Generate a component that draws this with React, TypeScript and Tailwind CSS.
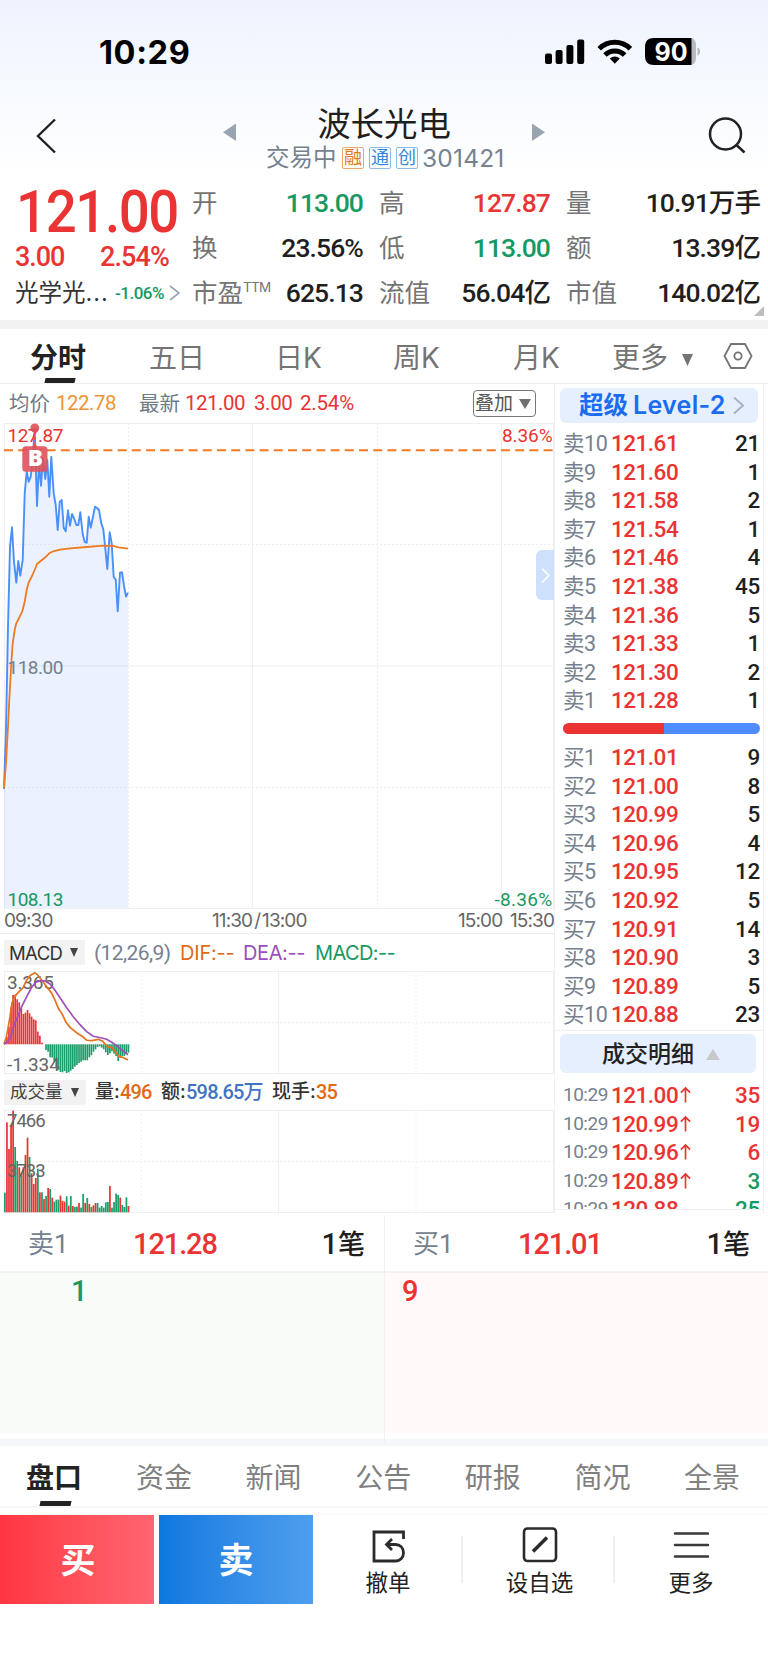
import React from "react";

const CJK = "font-['Inter','Noto_Sans_CJK_SC',sans-serif]";
const DIN = "font-['Roboto','Noto_Sans_CJK_SC',sans-serif]";

type Quote = [label: string, value: string, color: string];

const QUOTES: Quote[][] = [
  [["开", "113.00", "text-[#17995f]"], ["高", "127.87", "text-[#ea3434]"], ["量", "10.91万手", "text-[#1f1f1f]"]],
  [["换", "23.56%", "text-[#1f1f1f]"], ["低", "113.00", "text-[#17995f]"], ["额", "13.39亿", "text-[#1f1f1f]"]],
  [["市盈", "625.13", "text-[#1f1f1f]"], ["流值", "56.04亿", "text-[#1f1f1f]"], ["市值", "140.02亿", "text-[#1f1f1f]"]],
];

const SELLS: [string, string, string][] = [
  ["卖10", "121.61", "21"], ["卖9", "121.60", "1"], ["卖8", "121.58", "2"], ["卖7", "121.54", "1"], ["卖6", "121.46", "4"],
  ["卖5", "121.38", "45"], ["卖4", "121.36", "5"], ["卖3", "121.33", "1"], ["卖2", "121.30", "2"], ["卖1", "121.28", "1"],
];
const BUYS: [string, string, string][] = [
  ["买1", "121.01", "9"], ["买2", "121.00", "8"], ["买3", "120.99", "5"], ["买4", "120.96", "4"], ["买5", "120.95", "12"],
  ["买6", "120.92", "5"], ["买7", "120.91", "14"], ["买8", "120.90", "3"], ["买9", "120.89", "5"], ["买10", "120.88", "23"],
];
const TICKS: [string, string, string][] = [
  ["121.00", "35", "text-[#ea3434]"], ["120.99", "19", "text-[#ea3434]"], ["120.96", "6", "text-[#ea3434]"],
  ["120.89", "3", "text-[#17995f]"], ["120.88", "25", "text-[#17995f]"],
];

/* Series are stored at three units per pixel. */
const PRICE: [number, number][] = [
  [12, 1227], [18, 1050], [24, 740], [30, 500], [36, 442], [42, 545], [49, 608], [55, 543], [61, 587], [68, 540], [74, 340], [80, 275],
  [86, 305], [92, 290], [98, 240], [104, 145], [111, 378], [117, 250], [123, 317], [129, 235], [136, 297], [142, 240], [148, 350],
  [154, 230], [161, 340], [167, 375], [173, 450], [179, 366], [185, 360], [191, 443], [197, 454], [204, 391], [210, 437], [216, 402],
  [222, 415], [229, 435], [235, 435], [241, 397], [248, 462], [254, 486], [260, 488], [266, 410], [272, 443], [279, 410], [285, 380],
  [291, 384], [297, 390], [304, 430], [310, 448], [316, 505], [322, 567], [329, 457], [335, 490], [341, 592], [347, 598], [353, 694],
  [360, 578], [366, 577], [372, 618], [378, 650], [384, 638],
];
const AVERAGE: [number, number][] = [
  [12, 1225], [18, 1150], [24, 1040], [28, 960], [34, 850], [38, 790], [44, 750], [49, 730], [58, 712], [67, 694], [74, 665], [80, 630],
  [86, 607], [96, 588], [104, 570], [111, 552], [123, 542], [136, 532], [148, 520], [160, 514], [180, 509], [210, 505], [260, 501],
  [310, 497], [341, 498], [355, 502], [384, 506],
];
const DIF: [number, number][] = [
  [12, 492], [18, 475], [24, 445], [30, 410], [36, 368], [48, 345], [60, 332], [68, 325], [80, 300], [90, 287], [104, 278], [112, 284],
  [125, 300], [140, 320], [155, 340], [165, 360], [175, 385], [187, 403], [197, 425], [210, 442], [222, 452], [235, 462], [247, 469],
  [260, 481], [275, 482], [295, 478], [308, 484], [322, 500], [335, 502], [345, 513], [357, 530], [368, 532], [384, 540],
];
const DEA: [number, number][] = [
  [12, 492], [24, 484], [32, 470], [44, 430], [55, 405], [65, 380], [80, 350], [95, 322], [108, 307], [120, 302], [135, 303], [150, 312],
  [163, 328], [180, 353], [200, 383], [220, 410], [240, 434], [260, 455], [280, 469], [305, 474], [320, 478], [335, 487], [350, 497],
  [365, 510], [384, 524],
];
const HIST = [
  487, 470, 440, 382, 345, 344, 358, 367, 385, 402, 398, 390, 400, 410, 418, 421, 455, 467, 488, 493, 510, 515, 532, 533, 545, 562, 570,
  576, 577, 573, 579, 577, 572, 567, 560, 555, 549, 545, 541, 541, 541, 532, 526, 515, 508, 501, 499, 503, 508, 517, 525, 520, 514, 521,
  528, 543, 530, 528, 528, 521, 518,
];
const VOLUME = (
  "g938 r727 r807 r735 r692 g801 g843 r862 g880 r862 r825 r773 g831 r880 r912 r894 g866 r937 g937 r957 g948 r924 g927 r953 g965 g959 g959 r947 r963 r965 g949 " +
  "r977 g948 r978 g981 g980 r969 g983 g942 r969 g954 r972 g981 r976 r969 g969 g983 g978 g983 g967 g966 r918 g983 g966 g941 g945 r953 g975 g981 g952 r978"
).split(" ");

/* Converts a series into svg points, moved up by the pane's own top. */
const points = (list: [number, number][], shift: number) => list.map(([x, y]) => `${(x / 3).toFixed(1)},${(y / 3 - shift).toFixed(1)}`).join(" ");

const barX = (i: number) => 4 + i * 2.06;

function Grid({ xs, ys, bottom, dx, dy }: { xs: number[]; ys: number[]; bottom: number; dx: boolean[]; dy: boolean[] }) {
  return (
    <g stroke="#efeff1" strokeWidth="1" fill="none">
      <path d={`M4 .5H554M4 ${bottom}H554M4.5 0V${bottom}M553.5 0V${bottom}`} />
      {xs.map((x, i) => <line key={x} x1={x} x2={x} y1="0" y2={bottom} strokeDasharray={dx[i] ? "2 2" : undefined} />)}
      {ys.map((y, i) => <line key={y} x1="4" x2="554" y1={y} y2={y} strokeDasharray={dy[i] ? "2 2" : undefined} />)}
    </g>
  );
}

function StatusBar() {
  return (
    <div className="flex h-[104px] items-start pt-[36px] pl-[99px] text-black">
      <span className="w-[446px] text-[32.500px] leading-[34px] font-bold tracking-[0.600px]">10:29</span>
      <svg width="160" height="33" viewBox="545 36 160 33">
        <rect x="545" y="53.5" width="7" height="10.5" rx="2" />
        <rect x="555.6" y="50" width="7" height="14" rx="2" />
        <rect x="566.4" y="45" width="7" height="19" rx="2" />
        <rect x="577.2" y="39.5" width="7" height="24.5" rx="2" />
        <g fill="none" stroke="#000" strokeWidth="5">
          <path d="M599.2 48.7a22.3 22.3 0 0 1 31.2 0" />
          <path d="M604.9 55a14 14 0 0 1 19.8 0" />
        </g>
        <path d="M614.8 63.8l-5-5.2a7.2 7.2 0 0 1 10 0z" />
        <path d="M690 38h-3v27h3c4 0 6-3 6-8V46c0-5-2-8-6-8z" fill="#b6b9be" />
        <path d="M697.5 47.5c3.4 1 3.4 7 0 8.200z" fill="#b6b9be" />
        <path d="M654 38h37.500v27H654c-6 0-9-3-9-9v-9c0-6 3-9 9-9z" />
        <text x="671" y="60.500" textAnchor="middle" fontFamily="Inter" fontSize="25" fontWeight="700" fill="#fff">90</text>
      </svg>
    </div>
  );
}

function TitleBar() {
  return (
    <div className="flex h-[72px]">
      <svg width="240" height="72" viewBox="0 104 240 72">
        <path d="M55 119.500L38 136l17 16.500" fill="none" stroke="#222" strokeWidth="2.400" />
        <path d="M236 123.500v17.500l-13-8.800z" fill="#98a4b0" />
      </svg>
      <div className="w-[288px]">
        <div className="h-[41px] text-center text-[33.500px] leading-[41px] text-[#1f1f1f] -tracking-[0.100px]">波长光电</div>
        <div className="flex h-[24px] items-center pt-[1px] pl-[26px] text-[23.500px] leading-[24px] text-[#75818f]">
          <span className="w-[76px]">交易中</span>
          <span className="mr-[5px] h-[22px] w-[22px] rounded-[2px] border border-[#eda96c] text-center text-[18px] leading-[20px] text-[#e07a22]">融</span>
          <span className="mr-[5px] h-[22px] w-[22px] rounded-[2px] border border-[#8cbdea] text-center text-[18px] leading-[20px] text-[#3488d8]">通</span>
          <span className="mr-[4px] h-[22px] w-[22px] rounded-[2px] border border-[#8cbdea] text-center text-[18px] leading-[20px] text-[#3488d8]">创</span>
          <span className="text-[24.500px] tracking-[0.200px]">301421</span>
        </div>
      </div>
      <svg width="240" height="72" viewBox="528 104 240 72">
        <path d="M532 123.500v17.500l13-8.800z" fill="#98a4b0" />
        <g fill="none" stroke="#222" strokeWidth="2.500">
          <circle cx="725.500" cy="134" r="15.500" />
          <path d="M736.500 145l8 7.500" />
        </g>
      </svg>
    </div>
  );
}

function QuoteBlock() {
  return (
    <div className="relative flex h-[144px] pt-[4px]">
      <div className={`${DIN} w-[192px] pl-[15px] font-medium text-[#ea3434]`}>
        <div className="ml-[1px] h-[62px] w-[168px] origin-left scale-x-[0.925] text-[59px] leading-[63px] tracking-[-1.500px]">121.00</div>
        <div className="flex h-[30px] text-[27px] leading-[30px] tracking-[-1.100px]">
          <span className="w-[85px]">3.00</span>
          <span className="tracking-[-0.900px]">2.54%</span>
        </div>
        <div className="flex h-[42px] items-center">
          <span className={`${CJK} w-[100px] text-[23.500px] font-normal text-[#333]`}>光学光<span className="tracking-[1px]">...</span></span>
          <span className="w-[54px] text-[17px] leading-[20px] tracking-[-0.500px] text-[#17995f]">-1.06%</span>
          <svg width="11" height="16" viewBox="0 0 11 16"><path d="M1 1l9 7-9 7" fill="none" stroke="#9aa6b3" strokeWidth="1.600" /></svg>
        </div>
      </div>
      <div className="flex flex-col">
        {QUOTES.map((row, r) => (
          <div key={r} className="grid h-[45px] grid-cols-[171px_16px_171px_16px_194px] items-center">
            {row.map(([label, value, color], c) => (
              <React.Fragment key={label}>
                {c > 0 && <span />}
                <div className="flex items-center justify-between">
                  <span className="flex text-[25.500px] leading-[44px] text-[#747474]">
                    {label}
                    {label === "市盈" && <sup className="top-0 pt-[11px] text-[13.500px] leading-[10px] tracking-[-0.700px]">TTM</sup>}
                  </span>
                  <span className={`${DIN} text-[26.500px] leading-[44px] font-medium tracking-[-0.900px] ${color}`}>{value}</span>
                </div>
              </React.Fragment>
            ))}
          </div>
        ))}
      </div>
      <svg className="absolute right-[4px] bottom-[4px]" width="10" height="10"><path d="M10 0v10H0z" fill="#bdbdbd" /></svg>
    </div>
  );
}

function PeriodTabs() {
  return (
    <div className="flex h-[55px] border-b border-[#eeeeee] text-[28px] leading-[58px] text-[#747474]">
      <div className="relative w-[149px] pl-[30px] font-bold text-[#222]">
        分时
        <span className="absolute bottom-0 left-[45px] h-[5px] w-[30px] -skew-x-12 bg-[#222]" />
      </div>
      <span className="w-[126px]">五日</span>
      <span className="w-[118px]">日K</span>
      <span className="w-[120px]">周K</span>
      <span className="w-[99px]">月K</span>
      <span className="w-[70px]">更多</span>
      <svg className="mt-[25px]" width="11" height="12"><path d="M0 0h11l-5.500 12z" fill="#747474" /></svg>
      <svg className="mt-[14px] ml-[30px]" width="30" height="26" viewBox="0 0 30 26" fill="none" stroke="#747474" strokeWidth="1.800">
        <path d="M8 1h14l6.500 12L22 25H8L1.500 13z" />
        <circle cx="15" cy="13" r="3.600" />
      </svg>
    </div>
  );
}

const AXIS = "text-[19px] leading-[24px] tracking-[-0.900px] text-[#666]";

function Charts() {
  return (
    <div className="w-[554px]">
      <div className="flex h-[39px] items-center pl-[9px] text-[20.500px] leading-[43px] text-[#6f7b88]">
        <span className="w-[47px]">均价</span>
        <span className={`${DIN} w-[83px] tracking-[-0.500px] text-[#ec9436]`}>122.78</span>
        <span className="w-[46px]">最新</span>
        <span className={`${DIN} w-[69px] tracking-[-0.500px] text-[#ea3434]`}>121.00</span>
        <span className={`${DIN} w-[46px] tracking-[-0.400px] text-[#ea3434]`}>3.00</span>
        <span className={`${DIN} w-[173px] tracking-[-0.200px] text-[#ea3434]`}>2.54%</span>
        <span className="flex h-[27px] w-[63px] items-center rounded-[4px] border-[1.500px] border-[#777] pl-[1px] text-[19px] leading-[25px] text-[#555]">
          叠加
          <svg className="ml-[6px]" width="12" height="10"><path d="M0 0h12L6 10z" fill="#707070" /></svg>
        </span>
      </div>

      <svg className="block" width="554" height="486" viewBox="0 0 554 486">
        <Grid xs={[128.5, 252.5, 377.5, 501.5]} dx={[true, false, true, false]} ys={[121.5, 243, 364.5]} dy={[true, false, true]} bottom={485.5} />
        <polygon points={`${points(PRICE, 43)} 128,485 4,485`} fill="#4d7dff" fillOpacity="0.110" />
        <polyline points={points(PRICE, 43)} fill="none" stroke="#4a90fb" strokeWidth="1.900" strokeLinejoin="round" />
        <polyline points={points(AVERAGE, 43)} fill="none" stroke="#ee7a22" strokeWidth="1.800" strokeLinejoin="round" />
        <line x1="4" x2="554" y1="27.300" y2="27.300" stroke="#f47a24" strokeWidth="2" strokeDasharray="9 5.200" />
        <g className={DIN} fontSize="19" letterSpacing="-0.5">
          <text x="7.500" y="19" fill="#ea3434">127.87</text>
          <text x="552.500" y="19" fill="#ea3434" textAnchor="end" letterSpacing="-0.100">8.36%</text>
          <text x="7.500" y="250.500" fill="#75808b">118.00</text>
          <text x="7.500" y="482.500" fill="#17995f">108.13</text>
          <text x="552.500" y="482.500" fill="#17995f" textAnchor="end" letterSpacing="0.300">-8.36%</text>
        </g>
        <g fill="#e0505b" fillOpacity="0.900">
          <circle cx="34.800" cy="5" r="4.500" />
          <path d="M32 24l2.800-3.500 2.800 3.500z" />
          <rect x="22.300" y="23.300" width="25.200" height="25.500" rx="3.500" />
        </g>
        <path d="M34.800 9v13" stroke="#e0505b" strokeWidth="1.600" strokeDasharray="3 2" />
        <text x="35.300" y="43.300" textAnchor="middle" fontFamily="Open Sans" fontWeight="800" fontSize="22.500" fill="#fff">B</text>
        <path d="M554 127h-12a6 6 0 0 0-6 6v38a6 6 0 0 0 6 6h12z" fill="#cfe0fc" />
        <path d="M542 145.500l7 7-7 7" fill="none" stroke="#fff" strokeWidth="1.600" />
      </svg>

      <div className={`flex h-[25px] border-b border-[#ececee] pl-[4px] ${AXIS}`}>
        <span className="w-[208px]">09:30</span>
        <span className="w-[246px]">11:30<span className="px-[2px]">/</span>13:00</span>
        <span className="w-[52px]">15:00</span>
        <span>15:30</span>
      </div>

      <div className="flex h-[37px] items-center pl-[4px] text-[20px] leading-[26px]">
        <span className="flex h-[25px] w-[81px] items-center bg-[#f2f2f2] pl-[5px] text-[18.500px] text-[#333] tracking-[-0.600px]">
          <span className="w-[61px]">MACD</span>
          <svg width="8" height="9"><path d="M0 0h8L4 9z" fill="#444" /></svg>
        </span>
        <span className={`${DIN} ml-[9px] w-[86px] text-[21px] tracking-[-0.600px] text-[#75818f]`}>(12,26,9)</span>
        <span className="w-[63px] text-[#e36a14] tracking-[-0.200px]">DIF:--</span>
        <span className="w-[72px] tracking-[-0.400px] text-[#9b4fb8]">DEA:--</span>
        <span className="tracking-[-0.600px] text-[#17995f]">MACD:--</span>
      </div>

      <svg className="block" width="554" height="103" viewBox="0 0 554 103">
        <Grid xs={[141.3, 278.6, 416]} dx={[true, false, true]} ys={[51.500]} dy={[true]} bottom={102.5} />
        {HIST.map((y, i) => {
          const value = (493 - y) / 3;
          return <rect key={i} x={barX(i)} width="1.700" y={value > 0 ? 73.300 - value : 73.300} height={Math.abs(value)} fill={value > 0 ? "#ea3434" : "#1b9e69"} />;
        })}
        <g className={DIN} fontSize="19" fill="#666">
          <text x="7" y="17.500" letterSpacing="-0.200">3.365</text>
          <text x="7" y="99.500">-1.334</text>
        </g>
        <polyline points={points(DIF, 91)} fill="none" stroke="#e3731f" strokeWidth="1.700" />
        <polyline points={points(DEA, 91)} fill="none" stroke="#a050bb" strokeWidth="1.700" />
      </svg>

      <div className="flex h-[36px] items-center pl-[4px] text-[19px] leading-[26px] font-medium text-[#333]">
        <span className="flex h-[25px] w-[82px] items-center bg-[#f2f2f2] pl-[6px] text-[17.500px] font-normal text-[#444]">
          <span className="w-[61px]">成交量</span>
          <svg width="8" height="9"><path d="M0 0h8L4 9z" fill="#444" /></svg>
        </span>
        <span className="ml-[9px] w-[25px] whitespace-nowrap">量:</span>
        <span className={`${DIN} w-[41px] text-[20px] tracking-[-0.900px] text-[#e36a14]`}>496</span>
        <span className="w-[25px]">额:</span>
        <span className={`${DIN} w-[86px] text-[20px] tracking-[-0.800px] text-[#3f73c4]`}>598.65万</span>
        <span className="w-[44px]">现手:</span>
        <span className={`${DIN} text-[20px] tracking-[-0.900px] text-[#e36a14]`}>35</span>
      </div>

      <svg className="block" width="554" height="103" viewBox="0 0 554 103">
        <Grid xs={[141.3, 278.6, 416]} dx={[true, false, true]} ys={[51.500]} dy={[true]} bottom={102.5} />
        {VOLUME.map((bar, i) => {
          const height = (997 - Number(bar.slice(1))) / 3;
          return <rect key={i} x={barX(i)} width="1.750" y={102.300 - height} height={height} fill={bar[0] === "r" ? "#ea3434" : "#1b9e69"} />;
        })}
        <g className={DIN} fontSize="18.500" fill="#666" letterSpacing="-1">
          <text x="7" y="16.500">7466</text>
          <text x="7" y="67">3733</text>
        </g>
      </svg>
    </div>
  );
}

function BookRow({ row }: { row: [string, string, string] }) {
  return (
    <div className={`${DIN} grid h-[28.600px] grid-cols-[48px_91px_58px] pl-[9px] text-[22.500px] leading-[29px] font-medium`}>
      <span className="text-[21.500px] font-normal tracking-[-0.400px] text-[#75818f]">{row[0]}</span>
      <span className="tracking-[-0.500px] text-[#ea3434]">{row[1]}</span>
      <span className="text-right tracking-[-0.300px] text-[#1f1f1f]">{row[2]}</span>
    </div>
  );
}

function OrderBook() {
  return (
    <div className="h-[829px] w-[210px] overflow-hidden border-x border-[#f0f0f2] pt-[4px]">
      <div className="ml-[5px] flex h-[35px] w-[198px] items-center rounded-[6px] bg-[#e6effd] pl-[19px] text-[24.500px] font-semibold text-[#1a6df0]">
        <span className="w-[154px] whitespace-nowrap">超级<span className="ml-[5px] text-[25px] tracking-[0.300px]">Level-2</span></span>
        <svg width="12" height="19"><path d="M1 1.500l9 8-9 8" fill="none" stroke="#a9b2bd" strokeWidth="2" /></svg>
      </div>
      <div className="-ml-px h-[293px] pt-[6px]">{SELLS.map((r) => <BookRow key={r[0]} row={r} />)}</div>
      <div className="mt-[7px] ml-[8px] flex h-[11px] w-[197px] overflow-hidden rounded-[6px]">
        <span className="w-[101px] bg-[#ea3434]" />
        <span className="flex-1 bg-[#4f8dff]" />
      </div>
      <div className="-ml-px h-[297px] border-b border-[#f0f0f2] pt-[9px]">{BUYS.map((r) => <BookRow key={r[0]} row={r} />)}</div>
      <div className="mt-[3px] ml-[5px] flex h-[39px] w-[196px] items-center rounded-[6px] bg-[#e6effd] pt-[2px] pl-[42px] text-[23px] font-medium text-[#222]">
        <span className="w-[104px]">成交明细</span>
        <svg width="14" height="11"><path d="M0 11h14L7 0z" fill="#c6c8cb" /></svg>
      </div>
      <div className={`${DIN} -ml-px h-[137px] overflow-hidden border-b border-[#f0f0f2] pt-[8px] text-[22.500px] leading-[28.600px] font-medium`}>
        {TICKS.map(([price, qty, color], i) => (
          <div key={price} className="grid h-[28.600px] grid-cols-[48px_68px_23px_58px] pl-[9px] text-[#ea3434]">
            <span className="text-[19px] font-normal tracking-[-0.500px] text-[#75818f]">10:29</span>
            <span className="tracking-[-0.500px]">{price}</span>
            {i < 4 ? (
              <svg className="mt-[5px]" width="13" height="18" viewBox="0 0 14 18"><path d="M7 17V1.500M2 6.500l5-5 5 5" fill="none" stroke="#ea3434" strokeWidth="1.800" /></svg>
            ) : (
              <span />
            )}
            <span className={`text-right tracking-[-0.300px] ${color}`}>{qty}</span>
          </div>
        ))}
      </div>
    </div>
  );
}

function QueueHalf({ side, price, count, countStyle, panel, divider }: { side: string; price: string; count: string; countStyle: string; panel: string; divider: string }) {
  return (
    <div className={`${DIN} w-[384px] font-medium ${divider}`}>
      <div className="grid h-[56px] grid-cols-[105px_152px_80px] pl-[28px] text-[29px] leading-[58px]">
        <span className="text-[26px] font-normal text-[#75818f]">{side}</span>
        <span className="tracking-[-1.100px] text-[#ea3434]">{price}</span>
        <span className="text-right text-[#1f1f1f]">1<span className="text-[27px]">笔</span></span>
      </div>
      <div className={`h-[162px] border-t-2 border-[#f2f2f2] pt-px text-[29px] leading-[34px] ${panel}`}>
        <span className={countStyle}>{count}</span>
      </div>
      <div className="mt-[6px] h-[7px] bg-[#f4f6fa]" />
    </div>
  );
}

function BottomTabs() {
  return (
    <div className="h-[70px]">
      <div className="flex h-[63px] border-b-2 border-[#f6f6f6] pl-[26px] text-[28px] leading-[66px] text-[#808080]">
        <div className="relative w-[110px] shrink-0 font-bold text-[#222]">
          盘口
          <span className="absolute bottom-0 left-[14px] h-[5px] w-[31px] -skew-x-12 bg-[#222]" />
        </div>
        {["资金", "新闻", "公告", "研报", "简况", "全景"].map((t) => <span key={t} className="w-[109.600px] shrink-0">{t}</span>)}
      </div>
      <div className="h-[7px] border-b border-[#f8f8f8]" />
    </div>
  );
}

function ActionBar() {
  const item = "flex w-[150px] flex-col items-center pt-[12px]";
  return (
    <div className="flex h-[150px] items-start text-[22.500px] leading-[30px] text-[#222]">
      <div className="mr-[5px] h-[89px] w-[154px] bg-linear-to-r from-[#ff3541] to-[#ff6470] pl-[2px] text-center text-[35px] leading-[90px] font-bold text-white">买</div>
      <div className="h-[89px] w-[154px] bg-linear-to-r from-[#0a78df] to-[#4d9fee] text-center text-[35px] leading-[90px] font-bold text-white">卖</div>
      <div className={item}>
        <svg className="mb-[5px]" width="36" height="36" viewBox="0 0 36 36" fill="none" stroke="#2b2b2b" strokeWidth="2.800">
          <path d="M33.500 12V5H4v29h21.500a8 8 0 0 0 8-8c0-5.500-3.500-8.500-8-8.500H17" />
          <path d="M22 12l-5.500 5.500L22 23" />
        </svg>
        撤单
      </div>
      <span className="mt-[21px] -ml-[2px] h-[47px] w-[2px] bg-[#efefef]" />
      <div className={`${item} pl-[3px]`}>
        <svg className="mb-[5px]" width="36" height="36" viewBox="0 0 36 36" fill="none" stroke="#2b2b2b" strokeWidth="2.600">
          <rect x="2" y="1.500" width="32" height="32.500" rx="3.500" />
          <path d="M11 24.500L25 10.500" strokeWidth="3.500" />
        </svg>
        设自选
      </div>
      <span className="mt-[21px] h-[47px] w-[2px] bg-[#efefef]" />
      <div className={`${item} pl-[2px]`}>
        <svg className="mb-[5px]" width="36" height="36" viewBox="0 0 36 36" stroke="#3a3a3a" strokeWidth="2.600" strokeLinecap="round">
          <path d="M2 6.500h33M2 18h33M2 29.500h33" />
        </svg>
        更多
      </div>
    </div>
  );
}

export default function App() {
  return (
    <div className={`${CJK} h-[1665px] w-[768px] overflow-hidden bg-white`}>
      <div className="h-[320px] bg-linear-to-b from-[#eef4fe] to-white to-[55%]">
        <StatusBar />
        <TitleBar />
        <QuoteBlock />
      </div>
      <div className="h-[9px] bg-[#f2f2f2]" />
      <PeriodTabs />
      <div className="flex h-[831px]">
        <Charts />
        <OrderBook />
      </div>
      <div className="flex h-[230px]">
        <QueueHalf side="卖1" price="121.28" count="1" countStyle="ml-[71px] text-[#17995f]" panel="bg-[#f9fbf9]" divider="" />
        <QueueHalf side="买1" price="121.01" count="9" countStyle="ml-[17px] text-[#ea3434]" panel="bg-[#fffaf9]" divider="border-l border-[#f0f0f0]" />
      </div>
      <BottomTabs />
      <ActionBar />
    </div>
  );
}
